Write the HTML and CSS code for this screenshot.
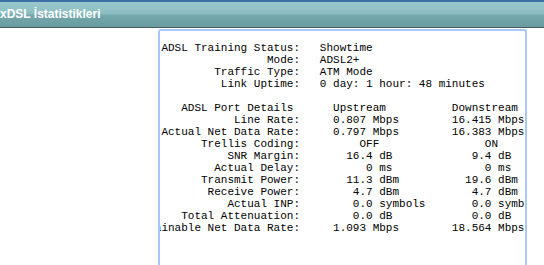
FILE: index.html
```html
<!DOCTYPE html>
<html lang="tr">
<head>
    <meta charset="UTF-8">
    <meta name="viewport" content="width=device-width, initial-scale=1.0">
    <title>xDSL İstatistikleri</title>
    <link rel="stylesheet" href="styles.css">
</head>
<body>

<div class="titlebar">
    <span class="title">xDSL İstatistikleri</span>
</div>

<div class="content">
    <div class="stats-box">
<pre class="stats">    ADSL Training Status:   Showtime
                    Mode:   ADSL2+
            Traffic Type:   ATM Mode
             Link Uptime:   0 day: 1 hour: 48 minutes

       ADSL Port Details      Upstream          Downstream
               Line Rate:     0.807 Mbps        16.415 Mbps
    Actual Net Data Rate:     0.797 Mbps        16.383 Mbps
          Trellis Coding:         OFF                ON
              SNR Margin:       16.4 dB            9.4 dB
            Actual Delay:          0 ms              0 ms
          Transmit Power:       11.3 dBm          19.6 dBm
           Receive Power:        4.7 dBm           4.7 dBm
              Actual INP:        0.0 symbols       0.0 symbols
       Total Attenuation:        0.0 dB            0.0 dB
Attainable Net Data Rate:     1.093 Mbps        18.564 Mbps</pre>
    </div>
</div>

</body>
</html>
```

FILE: styles.css
```css
body {
    margin: 0;
    padding: 0;
    background-color: #fff;
    font-family: "Liberation Sans", Arial, sans-serif;
}
.titlebar {
    height: 25px;
    border-top: 2px solid #3b6fa8;
    border-bottom: 1px solid #4b5b5c;
    background: linear-gradient(#99c8cb, #8dbec2 45%, #72a6ab 55%, #6a9ca1);
    display: flex;
    align-items: center;
}
.title {
    color: #fff;
    font-weight: bold;
    font-size: 12px;
    padding-bottom: 1px;
}
.content {
    padding: 1px 0 0 158px;
}
.stats-box {
    width: 365px;
    height: 234px;
    border: 2px solid #a9c7fa;
    border-bottom: 0;
    border-radius: 3px 3px 0 0;
    overflow: hidden;
}
.stats {
    margin: 11px 0 0 -25px;
    font-family: "Liberation Mono", "Courier New", monospace;
    font-size: 11px;
    line-height: 12px;
    color: #000;
}
```
